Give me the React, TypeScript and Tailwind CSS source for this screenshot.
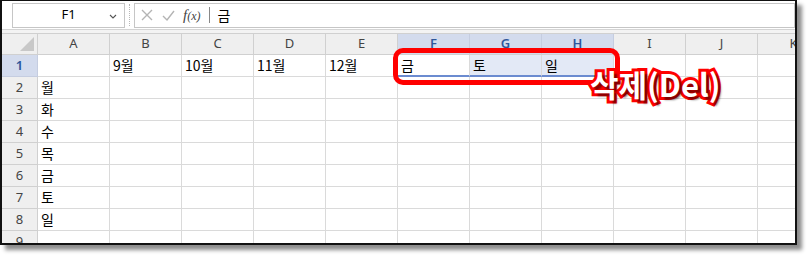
import React from "react";

const cols = ["A", "B", "C", "D", "E", "F", "G", "H", "I", "J", "K"];
const selected = ["F", "G", "H"];

const rows: Record<number, Record<string, string>> = {
  1: { B: "9월", C: "10월", D: "11월", E: "12월", F: "금", G: "토", H: "일" },
  2: { A: "월" },
  3: { A: "화" },
  4: { A: "수" },
  5: { A: "목" },
  6: { A: "금" },
  7: { A: "토" },
  8: { A: "일" },
  9: {},
};

const cellFont = { fontFamily: '"Noto Sans CJK KR", "Noto Sans", sans-serif' };
const uiFont = { fontFamily: '"Noto Sans", "Liberation Sans", sans-serif' };

function FormulaBar() {
  return (
    <div className="flex h-[29px] shrink-0 items-center border-b border-[#d4d4d4] bg-white pl-[10px]">
      <div className="relative flex h-[25px] w-[113px] items-center justify-center border border-[#c6c6c6] text-[13px] text-black" style={uiFont}>
        F1
        <svg className="absolute right-[7px] top-[10px]" width="8" height="5" viewBox="0 0 8 5">
          <path d="M1 1 L4 4 L7 1" fill="none" stroke="#555" strokeWidth="1.1" />
        </svg>
      </div>
      <div className="mx-[4px] h-[22px] w-px border-l border-dotted border-[#b8b8b8]" />
      <div className="flex h-[25px] flex-1 items-center border border-[#c6c6c6] pl-[6px]">
        <svg width="12" height="12" viewBox="0 0 12 12" className="mr-[9px]">
          <path d="M1 1 L11 11 M11 1 L1 11" stroke="#b4b4b4" strokeWidth="1.4" />
        </svg>
        <svg width="13" height="11" viewBox="0 0 13 11" className="mr-[8px]">
          <path d="M1 6 L5 10 L12 1" fill="none" stroke="#b4b4b4" strokeWidth="1.4" />
        </svg>
        <span className="text-[15px] italic text-[#444]" style={{ fontFamily: '"Liberation Serif", serif' }}>
          f<span className="text-[12px]">(x)</span>
        </span>
        <div className="ml-[8px] h-[16px] w-px bg-[#888]" />
        <span className="ml-[8px] text-[14px] text-black" style={cellFont}>
          금
        </span>
      </div>
    </div>
  );
}

function HeaderRow() {
  return (
    <div className="flex h-[22px] shrink-0 border-b border-t border-[#d0d0d0] bg-[#efefef]">
      <div className="relative w-[36px] shrink-0 border-r border-[#d0d0d0]">
        <svg className="absolute bottom-[3px] right-[3px]" width="14" height="14" viewBox="0 0 14 14">
          <path d="M14 0 L14 14 L0 14 Z" fill="#c8c8c8" />
        </svg>
      </div>
      {cols.map((c) => {
        const sel = selected.includes(c);
        return (
          <div
            key={c}
            className={
              sel
                ? "flex w-[72px] shrink-0 items-center justify-center border-r border-[#c5cde0] bg-[#d3dbed] text-[13px] font-semibold text-[#2d569b]"
                : "flex w-[72px] shrink-0 items-center justify-center border-r border-[#d0d0d0] text-[13px] text-[#444]"
            }
            style={uiFont}
          >
            {c}
          </div>
        );
      })}
    </div>
  );
}

function Row({ n }: { n: number }) {
  const data = rows[n];
  return (
    <div className="flex h-[22px] shrink-0">
      <div
        className={
          n === 1
            ? "flex w-[36px] shrink-0 items-center justify-center border-b border-r border-[#c5cde0] bg-[#d3dbed] text-[13px] font-semibold text-[#2d569b]"
            : "flex w-[36px] shrink-0 items-center justify-center border-b border-r border-[#d0d0d0] bg-[#efefef] text-[13px] text-[#444]"
        }
        style={uiFont}
      >
        {n}
      </div>
      {cols.map((c) => {
        const inSel = n === 1 && selected.includes(c);
        const bg = inSel && c !== "F" ? "bg-[#e3e9f6]" : "bg-white";
        const border = inSel ? "border-b-2 border-b-[#6b8bd0]" : "border-b border-b-[#dadada]";
        return (
          <div
            key={c}
            className={`flex w-[72px] shrink-0 items-center border-r border-r-[#dadada] pl-[3px] text-[14px] text-black ${bg} ${border}`}
            style={cellFont}
          >
            {data[c] ?? ""}
          </div>
        );
      })}
    </div>
  );
}

export default function App() {
  return (
    <div className="relative h-[272px] w-[808px] bg-white">
      <div className="flex h-[245px] w-[797px] flex-col overflow-hidden border-b-2 border-l-2 border-r-2 border-t border-[#111] bg-white shadow-[5px_5px_4px_rgba(0,0,0,0.45)]">
        <FormulaBar />
        <div className="h-[3px] shrink-0 bg-[#f3f3f3]" />
        <HeaderRow />
        {[1, 2, 3, 4, 5, 6, 7, 8, 9].map((n) => (
          <Row key={n} n={n} />
        ))}
      </div>

      <div className="absolute left-[393px] top-[48px] h-[37px] w-[227px] rounded-[10px] border-[5px] border-[#ff0000]" />
      <div
        className="absolute left-[590px] top-[64px] text-[31px] font-bold leading-[40px] text-white [-webkit-text-stroke:6px_#ff0000] [paint-order:stroke_fill] [text-shadow:3px_3px_2px_rgba(0,0,0,0.5)]"
        style={{ fontFamily: '"Noto Sans CJK KR", sans-serif' }}
      >
        삭제(Del)
      </div>
    </div>
  );
}
